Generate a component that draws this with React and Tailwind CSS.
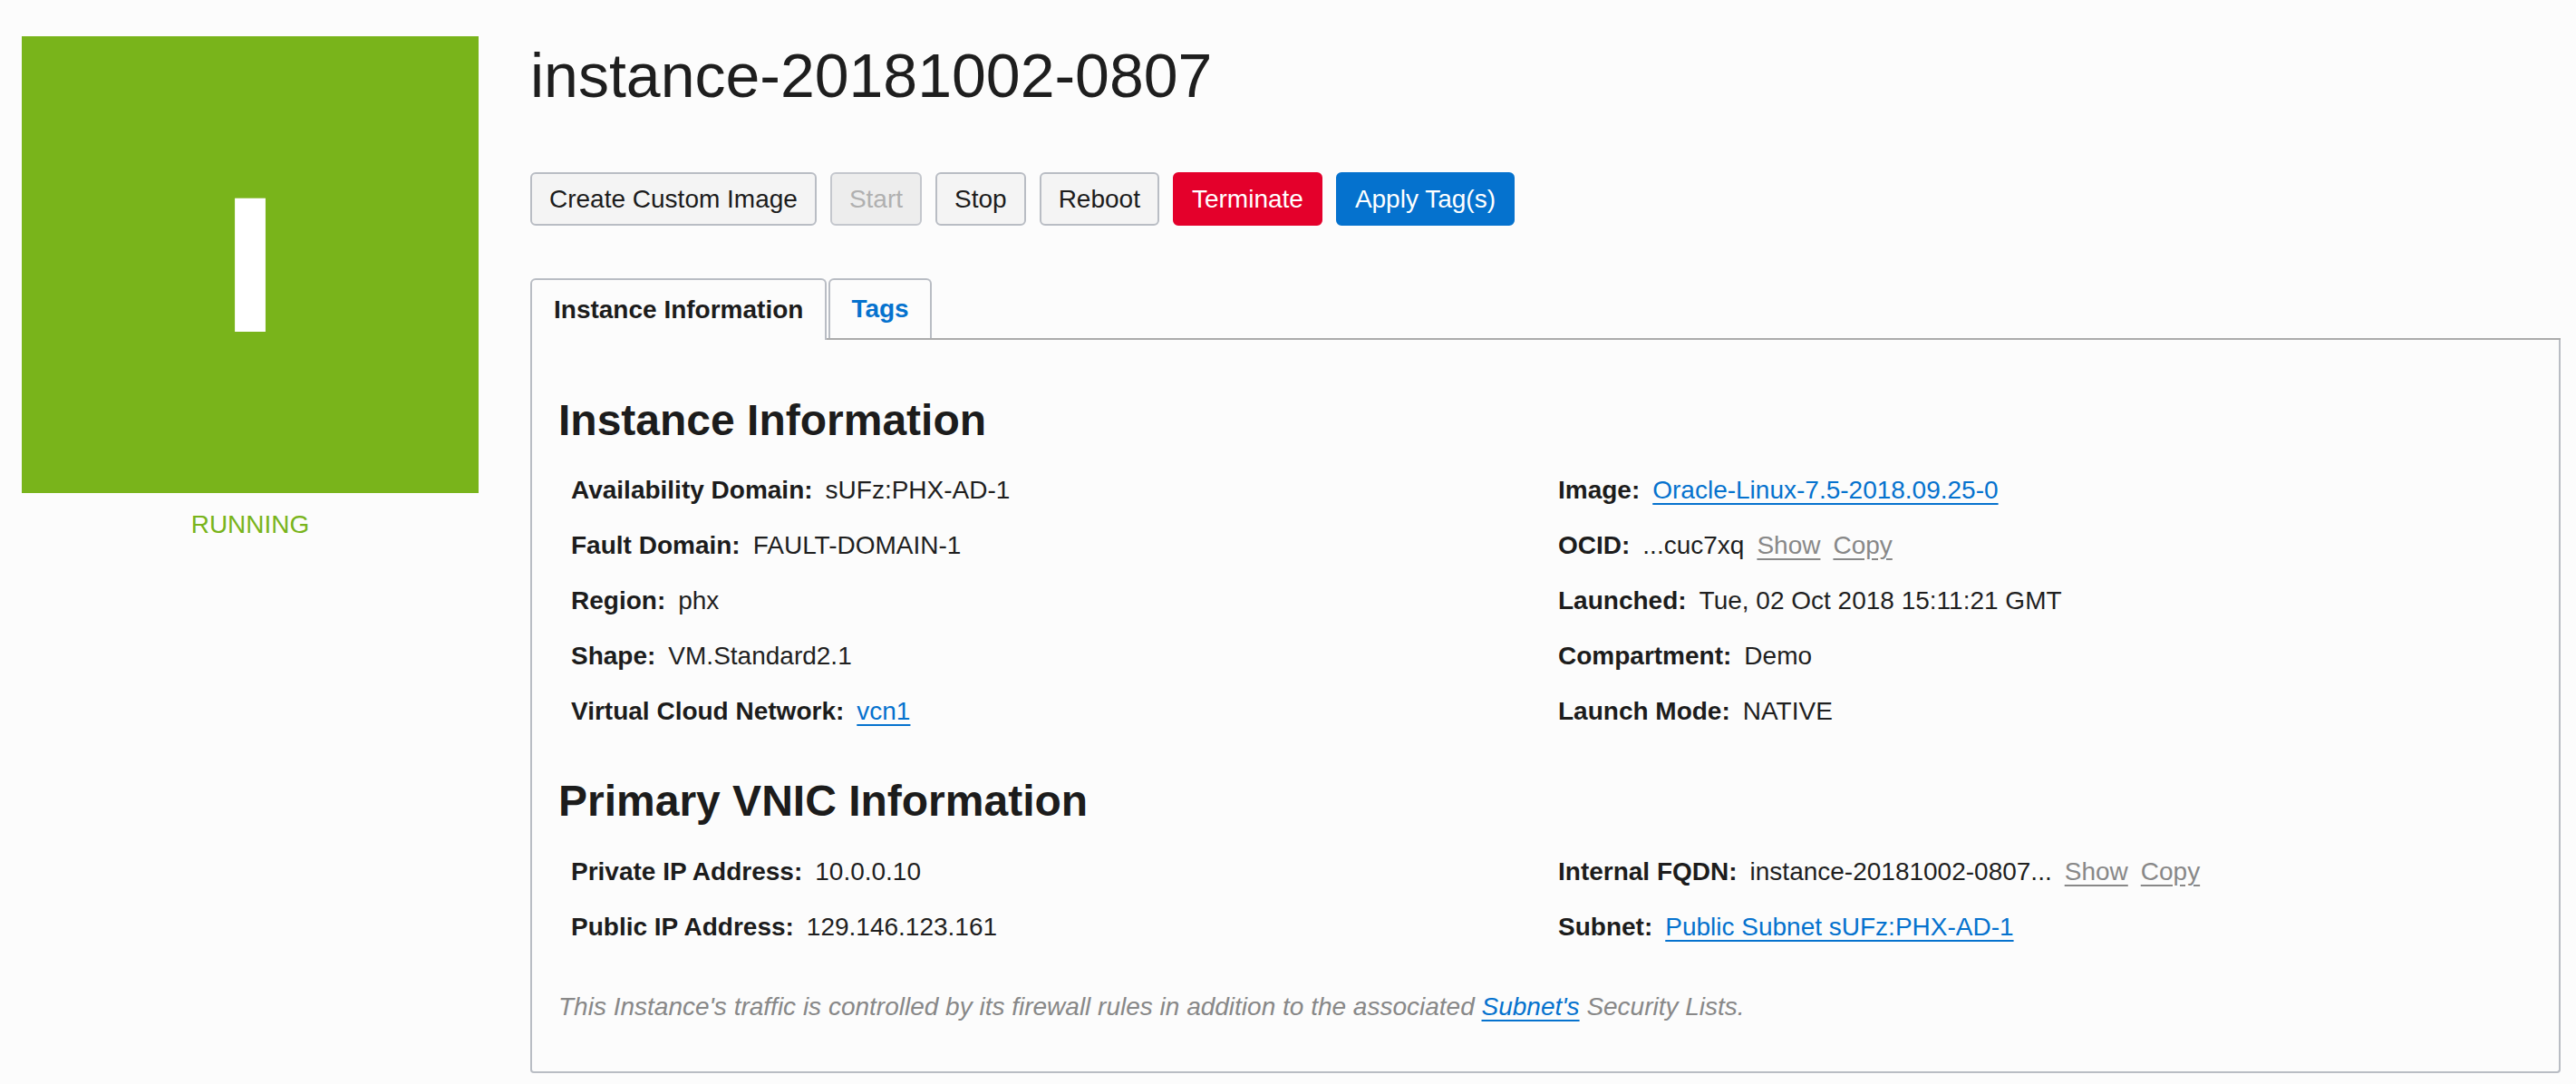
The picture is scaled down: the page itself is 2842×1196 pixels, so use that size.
import React from "react";

const leftRows = [
  { label: "Availability Domain:", value: "sUFz:PHX-AD-1" },
  { label: "Fault Domain:", value: "FAULT-DOMAIN-1" },
  { label: "Region:", value: "phx" },
  { label: "Shape:", value: "VM.Standard2.1" },
  { label: "Virtual Cloud Network:", value: "vcn1", link: true },
];

const rightRows = [
  { label: "Image:", value: "Oracle-Linux-7.5-2018.09.25-0", link: true },
  { label: "OCID:", value: "...cuc7xq", actions: true },
  { label: "Launched:", value: "Tue, 02 Oct 2018 15:11:21 GMT" },
  { label: "Compartment:", value: "Demo" },
  { label: "Launch Mode:", value: "NATIVE" },
];

const vnicLeft = [
  { label: "Private IP Address:", value: "10.0.0.10" },
  { label: "Public IP Address:", value: "129.146.123.161" },
];

const vnicRight = [
  { label: "Internal FQDN:", value: "instance-20181002-0807...", actions: true },
  { label: "Subnet:", value: "Public Subnet sUFz:PHX-AD-1", link: true },
];

function Row({ label, value, link, actions }) {
  return (
    <div className="flex gap-[14px] pl-[14px] leading-[61px] whitespace-nowrap">
      <span className="font-bold text-[#1c1c1c]">{label}</span>
      {link ? (
        <a href="#" className="text-[#0572ce] underline underline-offset-[5px]">
          {value}
        </a>
      ) : (
        <span>{value}</span>
      )}
      {actions && (
        <>
          <a href="#" className="text-[#888] underline underline-offset-[5px]">
            Show
          </a>
          <a href="#" className="text-[#888] underline underline-offset-[5px]">
            Copy
          </a>
        </>
      )}
    </div>
  );
}

function Details({ left, right, className = "" }) {
  return (
    <div className={`grid grid-cols-2 ${className}`}>
      <div className="flex flex-col">
        {left.map((r) => (
          <Row key={r.label} {...r} />
        ))}
      </div>
      <div className="flex flex-col">
        {right.map((r) => (
          <Row key={r.label} {...r} />
        ))}
      </div>
    </div>
  );
}

function Button({ children, variant = "default" }) {
  const styles = {
    default: "bg-[#f4f4f4] border-[#b9bdc4] text-[#1c1c1c]",
    disabled: "bg-[#ededed] border-[#c4c7cd] text-[#b0b0b0]",
    danger: "bg-[#e4002b] border-[#e4002b] text-white",
    primary: "bg-[#0572ce] border-[#0572ce] text-white",
  };
  return (
    <button
      className={`h-[59px] px-[19px] border-2 rounded-[6px] text-[28px] leading-[34px] flex items-center ${styles[variant]}`}
    >
      {children}
    </button>
  );
}

export default function App() {
  return (
    <div className="min-h-screen bg-[#fcfcfc] text-[#1f1f1f] font-['Liberation_Sans',Arial,sans-serif] text-[28px] flex">
      {/* LEFT: STATUS BADGE */}
      <aside className="pl-[24px] pt-[40px] shrink-0">
        <div className="w-[504px] h-[504px] bg-[#79b41b] flex items-center justify-center">
          <span className="text-white font-bold text-[207px] leading-[207px] [-webkit-text-stroke:4px_#fff]">
            I
          </span>
        </div>
        <div className="mt-[18px] text-center text-[#79b41b] leading-[34px]">RUNNING</div>
      </aside>

      {/* RIGHT: DETAILS */}
      <main className="flex-1 ml-[57px] pr-[17px] pt-[45px]">
        <h1 className="text-[68px] leading-[76px] text-[#1e1e1e]">instance-20181002-0807</h1>

        <div className="flex gap-[15px] mt-[69px]">
          <Button>Create Custom Image</Button>
          <Button variant="disabled">Start</Button>
          <Button>Stop</Button>
          <Button>Reboot</Button>
          <Button variant="danger">Terminate</Button>
          <Button variant="primary">Apply Tag(s)</Button>
        </div>

        {/* TABS */}
        <div className="flex items-end mt-[58px]">
          <div className="h-[68px] px-[24px] border-2 border-b-0 border-[#b9bdc4] rounded-t-[6px] flex items-center font-bold leading-[34px] text-[#1c1c1c]">
            Instance Information
          </div>
          <div className="flex-1 flex items-end border-b-2 border-[#ababab] pl-[2px]">
            <div className="h-[66px] px-[23px] border-2 border-b-0 border-[#b9bdc4] rounded-t-[6px] flex items-center font-bold leading-[34px] text-[#0572ce]">
              Tags
            </div>
          </div>
        </div>

        {/* PANEL */}
        <section className="border-2 border-t-0 border-[#b9bdc4] rounded-b-[4px] px-[29px] pt-[61px] pb-[54px]">
          <h2 className="text-[48px] leading-[56px] font-bold text-[#1c1c1c]">Instance Information</h2>
          <Details left={leftRows} right={rightRows} className="mt-[18px]" />

          <h2 className="mt-[41px] text-[48px] leading-[56px] font-bold text-[#1c1c1c]">
            Primary VNIC Information
          </h2>
          <Details left={vnicLeft} right={vnicRight} className="mt-[19px]" />

          <p className="mt-[41px] italic text-[#888] leading-[34px]">
            This Instance's traffic is controlled by its firewall rules in addition to the associated{" "}
            <a href="#" className="text-[#0572ce] underline underline-offset-[5px]">
              Subnet's
            </a>{" "}
            Security Lists.
          </p>
        </section>
      </main>
    </div>
  );
}
